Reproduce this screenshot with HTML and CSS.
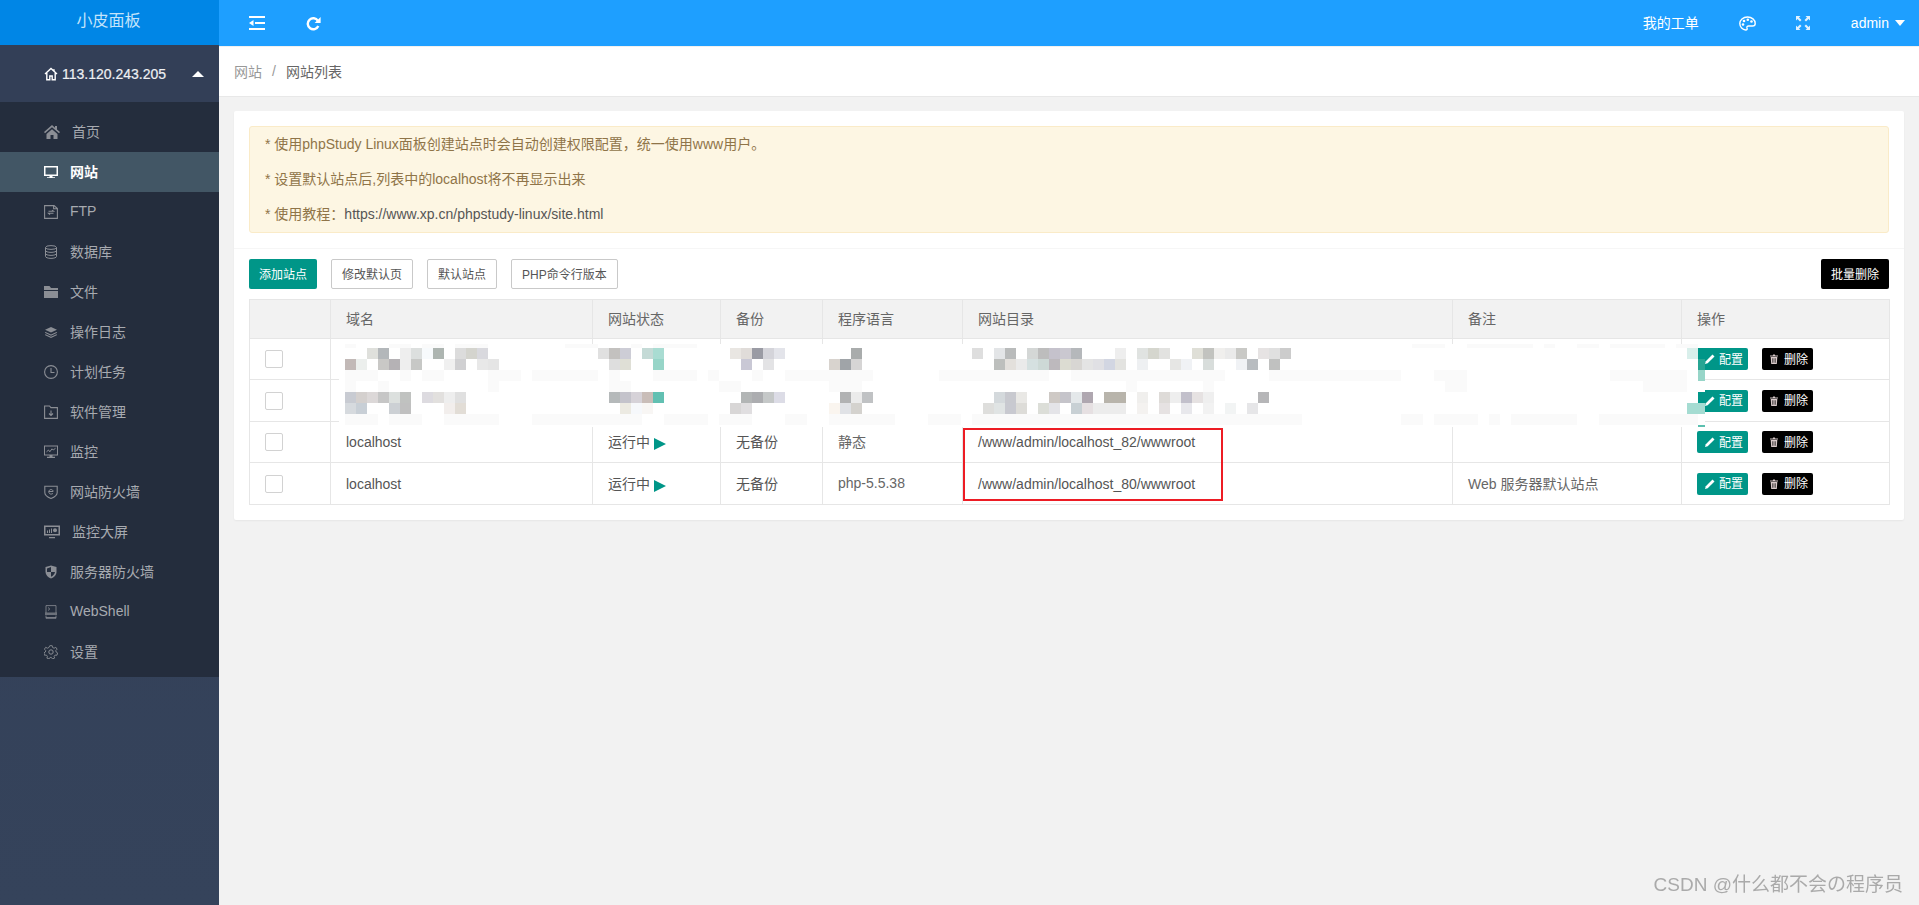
FILE: index.html
```html
<!DOCTYPE html>
<html lang="zh-CN">
<head>
<meta charset="utf-8">
<title>小皮面板</title>
<link rel="stylesheet" href="styles.css">
</head>
<body>
<div class="app">
  <aside class="sidebar">
    <div class="logo">小皮面板</div>
    <div class="server">
      <svg class="server-home" viewBox="0 0 14 14"><path d="M1 7 7 1.500 13 7M2.800 6v6.800h3V9h2.400v3.800h3V6M10 2.200v2" fill="none" stroke="#fff" stroke-width="1.400"/></svg>
      <span class="server-ip">113.120.243.205</span>
      <span class="caret-up"></span>
    </div>
    <nav class="nav">
      <a class="nav-item first"><svg class="ic wide" viewBox="0 0 16 14"><path d="M8 0 0 7l1 1.200L8 2.300l7 5.900L16 7l-3-2.600V1h-2v1.700zM2.500 9v5H6.500V10h3v4h4V9L8 4.200z" fill="currentColor"/></svg><span>首页</span></a>
      <a class="nav-item active"><svg class="ic" viewBox="0 0 14 14"><path d="M0 1h14v10H8.500v1.200H11V13H3v-.8h2.500V11H0zm1.500 1.500v7h11v-7z" fill="currentColor"/></svg><span>网站</span></a>
      <a class="nav-item"><svg class="ic" viewBox="0 0 14 14"><path d="M.6.600h9.500l3.300 3v9.800H.6zM9.600.800v3h3.500M4.500 6.300h5l-1.500-1M9.500 8.300h-5l1.500 1.300" fill="none" stroke="currentColor" stroke-width="1.100"/></svg><span>FTP</span></a>
      <a class="nav-item"><svg class="ic" viewBox="0 0 14 14"><ellipse cx="7" cy="2.500" rx="5.500" ry="1.900" fill="none" stroke="currentColor"/><path d="M1.500 2.500v9c0 1 2.500 1.900 5.500 1.900s5.500-.9 5.500-1.900v-9M1.500 5.500c0 1 2.500 1.900 5.500 1.900s5.500-.9 5.500-1.900M1.500 8.500c0 1 2.500 1.900 5.500 1.900s5.500-.9 5.500-1.900" fill="none" stroke="currentColor"/></svg><span>数据库</span></a>
      <a class="nav-item"><svg class="ic" viewBox="0 0 14 14"><path d="M0 1h5.500L7 3h7v2H0zM0 6h14v7H0z" fill="currentColor"/></svg><span>文件</span></a>
      <a class="nav-item"><svg class="ic" viewBox="0 0 14 14"><path d="M7 2 13 4.800 7 7.600 1 4.800zM1.500 7 7 9.500 12.500 7l.7.700L7 10.800.8 7.700zM1.500 9.300 7 11.800l5.500-2.500.7.700L7 13.100.8 10z" fill="currentColor"/></svg><span>操作日志</span></a>
      <a class="nav-item"><svg class="ic" viewBox="0 0 14 14"><circle cx="7" cy="7" r="6.400" fill="none" stroke="currentColor" stroke-width="1.100"/><path d="M7 3v4.500h3.500" fill="none" stroke="currentColor" stroke-width="1.100"/></svg><span>计划任务</span></a>
      <a class="nav-item"><svg class="ic" viewBox="0 0 14 14"><path d="M.6 1h4.900l1.400 1.600h6.500v10.800H.6zM7 5.500v4.800M5 8.500l2 2 2-2" fill="none" stroke="currentColor" stroke-width="1.100"/></svg><span>软件管理</span></a>
      <a class="nav-item"><svg class="ic" viewBox="0 0 14 14"><path d="M0 .6h14v9.800H8.500v1.400H11v1.200H3v-1.200h2.500v-1.400H0zm1 1v7.800h12V1.600z" fill="currentColor"/><path d="M2.500 6.800 4.500 5l1.300 1.800L8 3.800l1.200 1.200 2.300-1.700" fill="none" stroke="currentColor"/></svg><span>监控</span></a>
      <a class="nav-item"><svg class="ic" viewBox="0 0 14 14"><path d="M.8 1.300h12.400v6.200c0 2.500-2.800 4.700-6.200 6-3.400-1.300-6.200-3.500-6.200-6z" fill="none" stroke="currentColor" stroke-width="1.100"/><path d="M4.800 6.500h4.300c0-1.300-1-2-2.100-2-1.200 0-2.200 1-2.200 2.300 0 1.400 1 2.300 2.300 2.300.8 0 1.400-.3 1.900-.8" fill="none" stroke="currentColor"/></svg><span>网站防火墙</span></a>
      <a class="nav-item wide-item"><svg class="ic wide" viewBox="0 0 16 14"><path d="M0 .500h16v10H0zM5 12h6v1.300H5z" fill="currentColor"/><path d="M1.500 2h13v7h-13z" fill="#242d3d"/><path d="M3 5.500h1V8H3zM5 4.500h1V8H5zM7 3.500h1V8H7z" fill="currentColor"/><circle cx="11" cy="5.300" r="2" fill="currentColor"/></svg><span>监控大屏</span></a>
      <a class="nav-item"><svg class="ic" viewBox="0 0 14 14"><path d="M7 .500 12.500 2v5c0 3-2.500 5.300-5.500 6.500C4 12.300 1.500 10 1.500 7V2z" fill="currentColor"/><path d="M7 2v5H3v-3.500zM7 7h4c-.3 2-2 3.800-4 4.800z" fill="#242d3d"/></svg><span>服务器防火墙</span></a>
      <a class="nav-item"><svg class="ic" viewBox="0 0 14 14"><path d="M2 .6h10v7.400M2 8V.600M2 12.500h10M2 10.500v2.800h10v-2.800M4 2.500l1.800 1.500L4 5.500" fill="none" stroke="currentColor" stroke-width=".8"/><path d="M1 7.500h12v2.500H1z" fill="currentColor" opacity=".7"/></svg><span>WebShell</span></a>
      <a class="nav-item"><svg class="ic" viewBox="0 0 14 14"><circle cx="7" cy="7" r="2.200" fill="none" stroke="currentColor"/><path d="M5.800.700h2.400l.4 1.800 1.500.7 1.700-.9 1.300 1.900-1.300 1.300.3 1.500 1.500.9-.6 2.300-1.900-.1-1 1.200.5 1.800-2.200.8-1-1.500H6.100l-1 1.500-2.200-.8.500-1.800-1-1.200-1.900.1-.6-2.300 1.500-.9.300-1.500L.4 4.200l1.300-1.900 1.700.9 1.500-.7z" fill="none" stroke="currentColor" stroke-width=".9"/></svg><span>设置</span></a>
    </nav>
  </aside>

  <div class="column">
    <header class="topbar">
      <div class="top-left">
        <svg class="tool-a" viewBox="0 0 16 14"><path d="M0 0h16v2H0zM6 6h10v2H6zM0 12h16v2H0zM4.500 4v6L0 7z" fill="#fff"/></svg>
        <svg class="tool-b" viewBox="0 0 15 15"><path d="M12.300 10a5.500 5.500 0 1 1-.4-5.200" fill="none" stroke="#fff" stroke-width="2.400"/><path d="M14.600 1v6h-6z" fill="#fff"/></svg>
      </div>
      <div class="top-right">
        <span class="ticket">我的工单</span>
        <svg class="palette" viewBox="0 0 17 15"><path d="M8.500 1C4 1 .8 4 .8 7.500S3.700 14 6.700 14c1.500 0 1.700-1 1.300-2-.4-1.200.4-2 1.500-2h4c1.800 0 2.700-1 2.700-2.600C16.200 3.800 12.800 1 8.500 1z" fill="none" stroke="#fff" stroke-width="1.400"/><circle cx="4" cy="8.500" r="1.300" fill="#fff"/><circle cx="5" cy="5" r="1.300" fill="#fff"/><circle cx="8.800" cy="3.800" r="1.300" fill="#fff"/><circle cx="12.500" cy="5.500" r="1.300" fill="#fff"/></svg>
        <svg class="expand" viewBox="0 0 14 14"><path d="M0 0h4.500L3 1.500l2.500 2.500-1.500 1.500L1.500 3 0 4.500zM14 0v4.500L12.500 3 10 5.500 8.500 4 11 1.500 9.500 0zM0 14V9.500L1.500 11 4 8.500 5.500 10 3 12.500 4.500 14zM14 14H9.500l1.500-1.500L8.500 10 10 8.500l2.500 2.500L14 9.500z" fill="#dff1ff"/></svg>
        <span class="admin">admin</span>
        <span class="caret-down"></span>
      </div>
    </header>
    <div class="crumbs"><span class="crumb-a">网站</span><span class="crumb-sep">/</span><span class="crumb-b">网站列表</span></div>
    <main class="content">
      <section class="card">
        <div class="notice-wrap">
          <div class="notice">
            <p>* 使用phpStudy Linux面板创建站点时会自动创建权限配置，统一使用www用户。</p>
            <p>* 设置默认站点后,列表中的localhost将不再显示出来</p>
            <p>* 使用教程：<a class="notice-link">https://www.xp.cn/phpstudy-linux/site.html</a></p>
          </div>
        </div>
        <div class="list">
          <div class="toolbar">
            <button class="btn teal">添加站点</button>
            <button class="btn plain">修改默认页</button>
            <button class="btn plain">默认站点</button>
            <button class="btn plain">PHP命令行版本</button>
            <button class="btn black push">批量删除</button>
          </div>
          <div class="table-wrap">
            <table class="sites">
              <colgroup><col class="c1"><col class="c2"><col class="c3"><col class="c4"><col class="c5"><col class="c6"><col class="c7"><col class="c8"></colgroup>
              <thead><tr><th></th><th>域名</th><th>网站状态</th><th>备份</th><th>程序语言</th><th>网站目录</th><th>备注</th><th>操作</th></tr></thead>
              <tbody>
                <tr class="r-a"><td><span class="check"></span></td><td></td><td></td><td></td><td></td><td></td><td></td><td><div class="ops"><button class="act teal"><svg class="act-ic" viewBox="0 0 10 10"><path d="M0 10 .8 7.300 7.500.5l2 2L2.700 9.300z" fill="#fff"/></svg>配置</button><button class="act black"><svg class="act-ic" viewBox="0 0 10 10"><path d="M1 1.500h2.800L4.200.6h1.600l.4.900H9v1H1zM1.700 3h6.600l-.5 7H2.200zM3.500 4.300v4.500h.8V4.300zM5.700 4.300v4.500h.8V4.300z" fill="#d8c9c9"/></svg>删除</button></div></td></tr>
                <tr class="r-b"><td><span class="check"></span></td><td></td><td></td><td></td><td></td><td></td><td></td><td><div class="ops"><button class="act teal"><svg class="act-ic" viewBox="0 0 10 10"><path d="M0 10 .8 7.300 7.500.5l2 2L2.700 9.300z" fill="#fff"/></svg>配置</button><button class="act black"><svg class="act-ic" viewBox="0 0 10 10"><path d="M1 1.500h2.800L4.200.6h1.600l.4.900H9v1H1zM1.700 3h6.600l-.5 7H2.200zM3.500 4.300v4.500h.8V4.300zM5.700 4.300v4.500h.8V4.300z" fill="#d8c9c9"/></svg>删除</button></div></td></tr>
                <tr class="r-a"><td><span class="check"></span></td><td>localhost</td><td>运行中 <span class="play"></span></td><td class="dark">无备份</td><td>静态</td><td class="dark">/www/admin/localhost_82/wwwroot</td><td></td><td><div class="ops"><button class="act teal"><svg class="act-ic" viewBox="0 0 10 10"><path d="M0 10 .8 7.300 7.500.5l2 2L2.700 9.300z" fill="#fff"/></svg>配置</button><button class="act black"><svg class="act-ic" viewBox="0 0 10 10"><path d="M1 1.500h2.800L4.200.6h1.600l.4.900H9v1H1zM1.700 3h6.600l-.5 7H2.200zM3.500 4.300v4.500h.8V4.300zM5.700 4.300v4.500h.8V4.300z" fill="#d8c9c9"/></svg>删除</button></div></td></tr>
                <tr class="r-b"><td><span class="check"></span></td><td>localhost</td><td>运行中 <span class="play"></span></td><td class="dark">无备份</td><td>php-5.5.38</td><td class="dark">/www/admin/localhost_80/wwwroot</td><td>Web 服务器默认站点</td><td><div class="ops"><button class="act teal"><svg class="act-ic" viewBox="0 0 10 10"><path d="M0 10 .8 7.300 7.500.5l2 2L2.700 9.300z" fill="#fff"/></svg>配置</button><button class="act black"><svg class="act-ic" viewBox="0 0 10 10"><path d="M1 1.500h2.800L4.200.6h1.600l.4.900H9v1H1zM1.700 3h6.600l-.5 7H2.200zM3.500 4.300v4.500h.8V4.300zM5.700 4.300v4.500h.8V4.300z" fill="#d8c9c9"/></svg>删除</button></div></td></tr>
              </tbody>
            </table>
            <svg class="mosaic" viewBox="-0.545 -0.364 124.18 7.545" preserveAspectRatio="none" shape-rendering="crispEdges">
              <rect x="-0.545" y="-0.364" width="123.545" height="7.545" fill="#fff"/>
              <g fill="#fafafa">
                <rect x="0" y="-0.364" width="1" height=".364"/><rect x="4" y="-0.364" width="2" height=".364"/><rect x="7" y="-0.364" width="2" height=".364"/><rect x="10" y="-0.364" width="3" height=".364"/><rect x="20" y="-0.364" width="3" height=".364"/><rect x="26" y="-0.364" width="1" height=".364"/><rect x="28" y="-0.364" width="4" height=".364"/><rect x="97" y="-0.364" width="3" height=".364"/><rect x="102" y="-0.364" width="6" height=".364"/><rect x="109" y="-0.364" width="1" height=".364"/><rect x="112" y="-0.364" width="2" height=".364"/><rect x="115" y="-0.364" width="5" height=".364"/><rect x="121" y="-0.364" width="2" height=".364"/>
                <rect x="0" y="2" width="3" height="1"/><rect x="5" y="2" width="1" height="1"/><rect x="7" y="2" width="2" height="1"/><rect x="13" y="2" width="3" height="1"/><rect x="17" y="2" width="6" height="1"/><rect x="24" y="2" width="1" height="1"/><rect x="28" y="2" width="4" height="1"/><rect x="33" y="2" width="1" height="1"/><rect x="37" y="2" width="1" height="1"/><rect x="40" y="2" width="8" height="1"/><rect x="54" y="2" width="10" height="1"/><rect x="66" y="2" width="14" height="1"/><rect x="84" y="2" width="12" height="1"/><rect x="99" y="2" width="3" height="1"/><rect x="115" y="2" width="7" height="1"/>
                <rect x="0" y="3" width="1" height="1"/><rect x="3" y="3" width="1" height="1"/><rect x="13" y="3" width="1" height="1"/><rect x="24" y="3" width="2" height="1"/><rect x="34" y="3" width="2" height="1"/><rect x="44" y="3" width="3" height="1"/><rect x="71" y="3" width="1" height="1"/><rect x="78" y="3" width="1" height="1"/><rect x="100" y="3" width="2" height="1"/><rect x="118" y="3" width="4" height="1"/>
                <rect x="0" y="6" width="3" height="1"/><rect x="4" y="6" width="3" height="1"/><rect x="9" y="6" width="5" height="1"/><rect x="17" y="6" width="5" height="1"/><rect x="22" y="6" width="5" height="1"/><rect x="29" y="6" width="4" height="1"/><rect x="34" y="6" width="3" height="1"/><rect x="40" y="6" width="2" height="1"/><rect x="44" y="6" width="6" height="1"/><rect x="53" y="6" width="3" height="1"/><rect x="57" y="6" width="30" height="1"/><rect x="96" y="6" width="2" height="1"/><rect x="99" y="6" width="4" height="1"/><rect x="104" y="6" width="1" height="1"/><rect x="106" y="6" width="6" height="1"/><rect x="114" y="6" width="9" height="1"/>
              </g>
              <rect x="2" y="0" width="1" height="1" fill="#dfe0dc"/><rect x="3" y="0" width="1" height="1" fill="#b3b7ba"/><rect x="5" y="0" width="1" height="1" fill="#eee"/><rect x="6" y="0" width="1" height="1" fill="#dcdfde"/><rect x="7" y="0" width="1" height="1" fill="#f7fafc"/><rect x="8" y="0" width="1" height="1" fill="#adb5b1"/><rect x="10" y="0" width="1" height="1" fill="#dcdcdc"/><rect x="11" y="0" width="1" height="1" fill="#d4d4ce"/><rect x="12" y="0" width="1" height="1" fill="#d9d9de"/>
              <rect x="23" y="0" width="1" height="1" fill="#e0e0e0"/><rect x="24" y="0" width="1" height="1" fill="#c3c1bf"/><rect x="25" y="0" width="1" height="1" fill="#cdcdd6"/><rect x="27" y="0" width="1" height="1" fill="#c4dad6"/><rect x="28" y="0" width="1" height="1" fill="#a9dcd2"/>
              <rect x="35" y="0" width="1" height="1" fill="#e9e6e2"/><rect x="36" y="0" width="1" height="1" fill="#e0dcd9"/><rect x="37" y="0" width="1" height="1" fill="#9a9ba4"/><rect x="38" y="0" width="1" height="1" fill="#d4d4da"/><rect x="39" y="0" width="1" height="1" fill="#e3e4ea"/>
              <rect x="46" y="0" width="1" height="1" fill="#a9acac"/>
              <rect x="57" y="0" width="1" height="1" fill="#dedede"/><rect x="59" y="0" width="1" height="1" fill="#e3e5e7"/><rect x="60" y="0" width="1" height="1" fill="#b9bbbb"/><rect x="62" y="0" width="1" height="1" fill="#d4d7d6"/><rect x="63" y="0" width="1" height="1" fill="#bdbdbd"/><rect x="64" y="0" width="1" height="1" fill="#c5c2cc"/><rect x="65" y="0" width="1" height="1" fill="#cac8d0"/><rect x="66" y="0" width="1" height="1" fill="#b5b8bb"/><rect x="70" y="0" width="1" height="1" fill="#eee"/><rect x="72" y="0" width="1" height="1" fill="#e0e3e1"/><rect x="73" y="0" width="1" height="1" fill="#d5d6ce"/><rect x="74" y="0" width="1" height="1" fill="#e2e2e0"/><rect x="77" y="0" width="1" height="1" fill="#dfdfd7"/><rect x="78" y="0" width="1" height="1" fill="#c2c3bf"/><rect x="79" y="0" width="1" height="1" fill="#f0efed"/><rect x="80" y="0" width="1" height="1" fill="#eaeaea"/><rect x="81" y="0" width="1" height="1" fill="#c9c9c6"/><rect x="83" y="0" width="1" height="1" fill="#e6e3e3"/><rect x="84" y="0" width="1" height="1" fill="#e0e0e0"/><rect x="85" y="0" width="1" height="1" fill="#ccc"/>
              <rect x="0" y="1" width="1" height="1" fill="#c2b9b7"/><rect x="1" y="1" width="1" height="1" fill="#ecefed"/><rect x="3" y="1" width="1" height="1" fill="#c9c8c6"/><rect x="4" y="1" width="1" height="1" fill="#b5b2b5"/><rect x="5" y="1" width="1" height="1" fill="#eee"/><rect x="6" y="1" width="1" height="1" fill="#c7c8c6"/><rect x="9" y="1" width="1" height="1" fill="#f0f0f0"/><rect x="10" y="1" width="1" height="1" fill="#d0d0d2"/><rect x="12" y="1" width="1" height="1" fill="#e8e8e8"/><rect x="13" y="1" width="1" height="1" fill="#e5e5e5"/>
              <rect x="24" y="1" width="1" height="1" fill="#dedede"/><rect x="25" y="1" width="1" height="1" fill="#dfdfd6"/><rect x="28" y="1" width="1" height="1" fill="#97d5c8"/>
              <rect x="36" y="1" width="1" height="1" fill="#c9c8d5"/><rect x="38" y="1" width="1" height="1" fill="#e3e3e5"/>
              <rect x="44" y="1" width="1" height="1" fill="#d8d3ce"/><rect x="45" y="1" width="1" height="1" fill="#a0a4a8"/><rect x="46" y="1" width="1" height="1" fill="#d6d5d5"/>
              <rect x="59" y="1" width="1" height="1" fill="#bdbfbd"/><rect x="60" y="1" width="1" height="1" fill="#e3e0dc"/><rect x="61" y="1" width="1" height="1" fill="#eaeaea"/><rect x="62" y="1" width="1" height="1" fill="#d5e0e0"/><rect x="63" y="1" width="1" height="1" fill="#cdd9d6"/><rect x="64" y="1" width="1" height="1" fill="#bdb9bd"/><rect x="65" y="1" width="1" height="1" fill="#dcdcd2"/><rect x="66" y="1" width="1" height="1" fill="#d8d6d3"/><rect x="67" y="1" width="1" height="1" fill="#e4e4e4"/><rect x="68" y="1" width="1" height="1" fill="#e0e0e4"/><rect x="69" y="1" width="1" height="1" fill="#d2d6e2"/><rect x="70" y="1" width="1" height="1" fill="#e3e3e0"/><rect x="72" y="1" width="1" height="1" fill="#eef0f2"/><rect x="75" y="1" width="1" height="1" fill="#e6e6e4"/><rect x="76" y="1" width="1" height="1" fill="#f0f2f5"/><rect x="78" y="1" width="1" height="1" fill="#d8dddb"/><rect x="81" y="1" width="1" height="1" fill="#f0f2f5"/><rect x="82" y="1" width="1" height="1" fill="#b8bcc0"/><rect x="84" y="1" width="1" height="1" fill="#c0c1c0"/>
              <rect x="0" y="4" width="1" height="1" fill="#c8cbd2"/><rect x="1" y="4" width="1" height="1" fill="#d4d0ce"/><rect x="2" y="4" width="1" height="1" fill="#dcd8d8"/><rect x="3" y="4" width="1" height="1" fill="#c6c6c6"/><rect x="4" y="4" width="1" height="1" fill="#dce0de"/><rect x="5" y="4" width="1" height="1" fill="#c0c2c0"/><rect x="7" y="4" width="1" height="1" fill="#dddbe0"/><rect x="8" y="4" width="1" height="1" fill="#e2e0de"/><rect x="9" y="4" width="1" height="1" fill="#eee"/><rect x="10" y="4" width="1" height="1" fill="#e0e0e0"/>
              <rect x="24" y="4" width="1" height="1" fill="#b5b9ba"/><rect x="25" y="4" width="1" height="1" fill="#c4c3cb"/><rect x="26" y="4" width="1" height="1" fill="#d6d2d8"/><rect x="27" y="4" width="1" height="1" fill="#c9bdb8"/><rect x="28" y="4" width="1" height="1" fill="#62c0b2"/>
              <rect x="36" y="4" width="1" height="1" fill="#b2b5b5"/><rect x="37" y="4" width="1" height="1" fill="#acadb0"/><rect x="38" y="4" width="1" height="1" fill="#c5c8c8"/><rect x="39" y="4" width="1" height="1" fill="#dcdce6"/>
              <rect x="45" y="4" width="1" height="1" fill="#b1b2b3"/><rect x="46" y="4" width="1" height="1" fill="#ebebeb"/><rect x="47" y="4" width="1" height="1" fill="#c0c2c4"/>
              <rect x="59" y="4" width="1" height="1" fill="#d4d9dc"/><rect x="60" y="4" width="1" height="1" fill="#c8c9cf"/><rect x="61" y="4" width="1" height="1" fill="#e9e8e5"/><rect x="64" y="4" width="1" height="1" fill="#cec9c5"/><rect x="65" y="4" width="1" height="1" fill="#c5c4ca"/><rect x="66" y="4" width="1" height="1" fill="#e4e8ea"/><rect x="67" y="4" width="1" height="1" fill="#afa7b0"/><rect x="69" y="4" width="2" height="1" fill="#b8b4ab"/><rect x="72" y="4" width="1" height="1" fill="#f0efed"/><rect x="74" y="4" width="1" height="1" fill="#dedbd8"/><rect x="75" y="4" width="1" height="1" fill="#eee"/><rect x="76" y="4" width="1" height="1" fill="#c2c0cb"/><rect x="77" y="4" width="1" height="1" fill="#e6e2e2"/><rect x="78" y="4" width="1" height="1" fill="#efefef"/><rect x="83" y="4" width="1" height="1" fill="#b6b6b8"/>
              <rect x="0" y="5" width="1" height="1" fill="#d6dade"/><rect x="1" y="5" width="1" height="1" fill="#c8cfd6"/><rect x="4" y="5" width="1" height="1" fill="#ccd0d4"/><rect x="5" y="5" width="1" height="1" fill="#c0c0c0"/><rect x="9" y="5" width="1" height="1" fill="#f2eeec"/><rect x="10" y="5" width="1" height="1" fill="#e2ddd6"/>
              <rect x="25" y="5" width="1" height="1" fill="#eceae2"/><rect x="26" y="5" width="1" height="1" fill="#f6f8fb"/><rect x="27" y="5" width="1" height="1" fill="#f8f6f4"/>
              <rect x="35" y="5" width="1" height="1" fill="#d8d6d6"/><rect x="36" y="5" width="1" height="1" fill="#e0dee0"/>
              <rect x="44" y="5" width="1" height="1" fill="#faf5ef"/><rect x="45" y="5" width="1" height="1" fill="#e0e2e6"/><rect x="46" y="5" width="1" height="1" fill="#d4d2ce"/>
              <rect x="58" y="5" width="1" height="1" fill="#dededc"/><rect x="59" y="5" width="1" height="1" fill="#e0e4e4"/><rect x="60" y="5" width="1" height="1" fill="#c8c9d0"/><rect x="61" y="5" width="1" height="1" fill="#dddcd8"/><rect x="63" y="5" width="1" height="1" fill="#dcded8"/><rect x="64" y="5" width="1" height="1" fill="#e4e4e8"/><rect x="66" y="5" width="1" height="1" fill="#c8d0d4"/><rect x="67" y="5" width="1" height="1" fill="#e6e0e2"/><rect x="68" y="5" width="3" height="1" fill="#ececec"/><rect x="72" y="5" width="1" height="1" fill="#f4f2f0"/><rect x="74" y="5" width="1" height="1" fill="#e6e2e2"/><rect x="76" y="5" width="1" height="1" fill="#e8e8ec"/><rect x="78" y="5" width="1" height="1" fill="#f2f2f2"/><rect x="80" y="5" width="1" height="1" fill="#f2f4f4"/><rect x="82" y="5" width="1" height="1" fill="#e6e6e8"/>
              <rect x="122" y="0" width="1" height="1" fill="#d9efeb"/><rect x="122" y="5" width="1" height="1" fill="#a5dcd2"/>
              <rect x="123" y="-0.364" width="0.64" height=".364" fill="#fff"/><rect x="123" y="0" width="0.64" height="1" fill="#009688"/><rect x="123" y="1" width="0.64" height="1" fill="#27a593"/><rect x="123" y="2" width="0.64" height="1" fill="#97d5c8"/><rect x="123" y="3" width="0.64" height="1" fill="#fff"/><rect x="123" y="4" width="0.64" height="1" fill="#009688"/><rect x="123" y="5" width="0.64" height="1" fill="#a5dcd2"/><rect x="123" y="6" width="0.64" height="1" fill="#fff"/><rect x="123" y="7" width="0.64" height=".181" fill="#5cc0b0"/>
            </svg>
            <div class="redbox"></div>
          </div>
        </div>
      </section>
    </main>
  </div>
</div>
<div class="watermark">CSDN @什么都不会の程序员</div>
</body>
</html>
```
FILE: styles.css
```css
* { box-sizing: border-box; }
html, body { margin: 0; height: 100%; overflow: hidden; }
body {
  font-family: "Liberation Sans", "Noto Sans CJK SC", sans-serif;
  font-size: 14px;
  color: #666;
  background: #f2f2f2;
}
.app { display: flex; height: 100vh; }

/* sidebar */
.sidebar { width: 219px; flex: none; background: linear-gradient(#323e56, #35435b); display: flex; flex-direction: column; }
.logo { height: 45px; background: #0086e6; color: #c4e4fb; font-size: 16px; line-height: 42px; text-align: center; padding-right: 2px; }
.server { height: 57px; display: flex; align-items: center; padding-left: 44px; background: #333f57; color: #eef0f3; position: relative; }
.server-home { width: 14px; height: 14px; margin-right: 4px; }
.server-ip { font-size: 14px; font-weight: 400; -webkit-text-stroke: .2px #eef0f3; }
.caret-up { margin-left: 26px; width: 0; height: 0; border-left: 6px solid transparent; border-right: 6px solid transparent; border-bottom: 6px solid #fff; }
.nav { background: #242d3d; padding: 10px 0 5px; display: flex; flex-direction: column; }
.nav-item { height: 40px; display: flex; align-items: center; padding-left: 44px; color: #a7aab0; font-size: 14px; }
.nav-item span { margin-top: -2px; }
.nav-item.active { background: #425665; color: #fff; font-weight: 700; }
.ic { width: 14px; height: 14px; margin-right: 12px; flex: none; color: #8b8e95; }
.nav-item.active .ic { color: #fff; }
.ic.wide { width: 16px; margin-right: 12px; }

/* top */
.column { flex: 1; min-width: 0; display: flex; flex-direction: column; }
.topbar { height: 46px; background: #1e9fff; display: flex; justify-content: space-between; align-items: center; color: #fff; flex: none; border-bottom: 0; }
.top-left { display: flex; align-items: center; padding-left: 30px; }
.tool-a { width: 16px; height: 14px; margin-right: 41px; }
.tool-b { width: 15px; height: 15px; }
.top-right { display: flex; align-items: center; padding-right: 14px; }
.ticket { margin-right: 40px; margin-top: -2px; }
.palette { width: 17px; height: 15px; margin-right: 40px; }
.expand { width: 14px; height: 14px; margin-right: 41px; }
.admin { margin-right: 6px; }
.caret-down { width: 0; height: 0; border-left: 5.500px solid transparent; border-right: 5.500px solid transparent; border-top: 6px solid #fff; }
.crumbs { height: 51px; background: #fff; border-top: 1px solid #f0f0f0; border-bottom: 1px solid #e8e8e8; display: flex; align-items: center; padding: 0 0 2px 15px; flex: none; }
.crumb-a { color: #999; }
.crumb-sep { color: #999; margin: 0 10px; }
.crumb-b { color: #666; }

/* content */
.content { padding: 14px 15px 0; }
.card { background: #fff; border-radius: 2px; box-shadow: 0 1px 2px rgba(0,0,0,.05); }
.notice-wrap { padding: 15px 15px 15px; border-bottom: 1px solid #f6f6f6; }
.notice { background: #fdf6e3; border: 1px solid #faebc8; border-radius: 3px; padding: 7px 15px 8px; height: 107px; color: #8f7448; }
.notice p { margin: 0 0 14px; line-height: 21px; }
.notice p:last-child { margin-bottom: 0; }
.notice-link { color: #555; }
.list { padding: 10px 15px 15px; }
.toolbar { display: flex; gap: 14px; margin-bottom: 10px; }
.btn { height: 30px; padding: 0 0 2px; font: inherit; font-size: 12px; border-radius: 2px; cursor: pointer; border: 1px solid transparent; }
.btn.teal { width: 68px; background: #009688; color: #fff; }
.btn.plain { background: #fff; border-color: #c9c9c9; color: #555; padding: 0 10px 2px; }
.btn.black { width: 68px; background: #000; color: #fff; }
.push { margin-left: auto; }

/* table */
.table-wrap { position: relative; }
.sites { width: 1640px; border-collapse: collapse; table-layout: fixed; }
.c1 { width: 81px; } .c2 { width: 262px; } .c3 { width: 128px; } .c4 { width: 102px; }
.c5 { width: 140px; } .c6 { width: 490px; } .c7 { width: 229px; } .c8 { width: 208px; }
.sites th, .sites td { border: 1px solid #e6e6e6; padding: 0 15px; text-align: left; font-weight: 400; }
.sites th { height: 39px; background: #f2f2f2; color: #666; padding-bottom: 2px; }
.r-a td { height: 41px; }
.r-b td { height: 42px; }
.sites td:nth-child(3), .sites td:nth-child(4), .sites td:nth-child(5), .sites td:nth-child(7) { padding-bottom: 2px; }
.dark { color: #555; }
.sites td:nth-child(2), .sites td:nth-child(3) { color: #555; }
.check { display: block; width: 18px; height: 18px; border: 1px solid #d2d2d2; border-radius: 2px; background: #fff; }
.play { display: inline-block; width: 0; height: 0; border-left: 12px solid #009688; border-top: 6px solid transparent; border-bottom: 6px solid transparent; vertical-align: -3px; }
.ops { display: flex; gap: 14px; }
.act { width: 51px; height: 22px; border: 0; padding: 0 0 2px 8px; border-radius: 2px; font: inherit; font-size: 12px; color: #fff; display: flex; align-items: center; }
.act.teal { background: #009688; }
.act.black { background: #000; padding-left: 7px; }
.act-ic { width: 10px; height: 10px; margin: 2px 4px 0 0; }
.act.black .act-ic { margin-right: 5px; }
.mosaic { position: absolute; left: 90px; top: 45px; width: 1366px; height: 83px; }
.redbox { position: absolute; left: 714px; top: 129px; width: 260px; height: 73px; border: 2px solid #ed1c24; }

.watermark { position: fixed; right: 16px; bottom: 7px; font-size: 19px; line-height: 26px; color: #aaa; }
```
